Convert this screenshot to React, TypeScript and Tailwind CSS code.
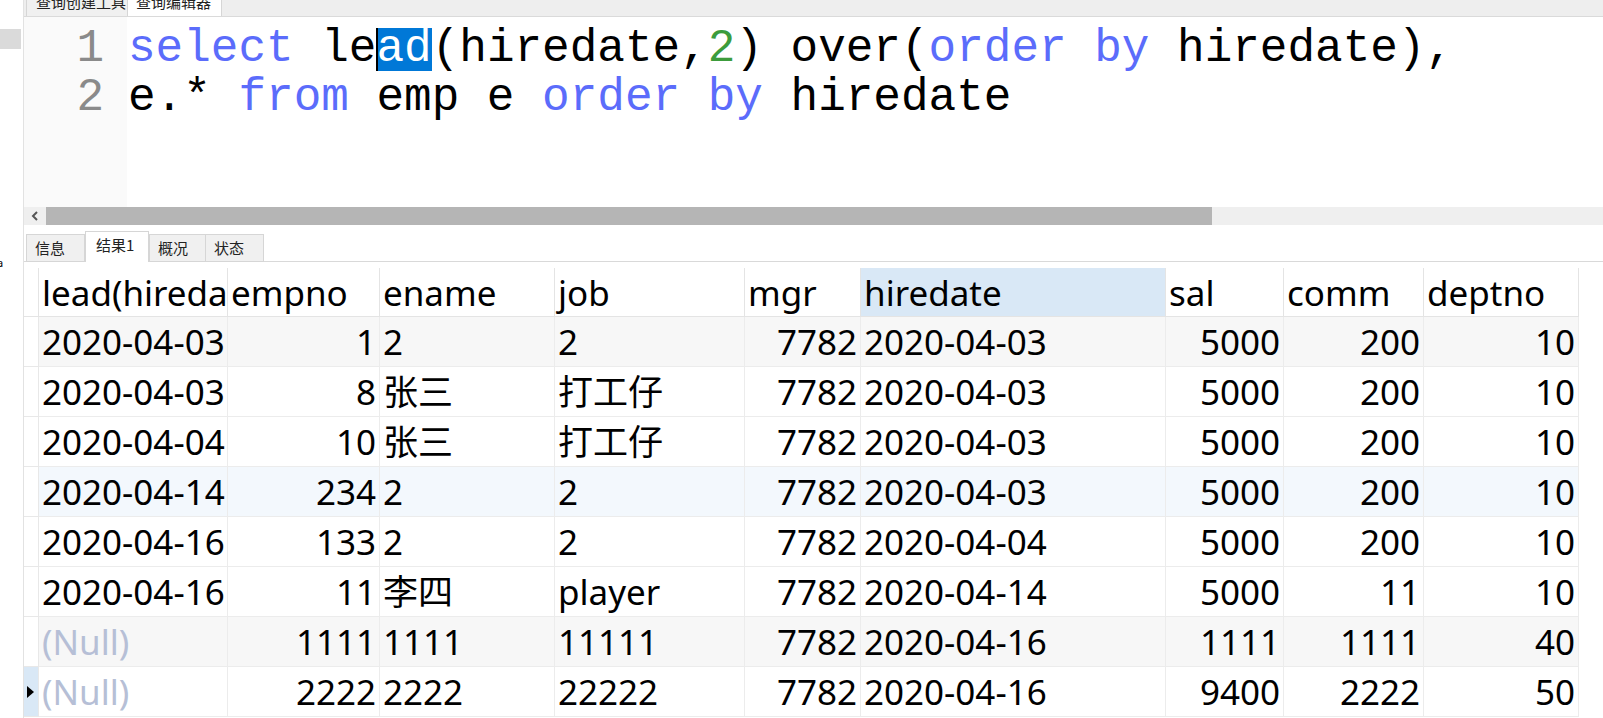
import React from 'react';

type Cell = string | null;

const columns = [
  { name: 'lead(hiredate)', right: false },
  { name: 'empno', right: true },
  { name: 'ename', right: false },
  { name: 'job', right: false },
  { name: 'mgr', right: true },
  { name: 'hiredate', right: false },
  { name: 'sal', right: true },
  { name: 'comm', right: true },
  { name: 'deptno', right: true },
];

const rows: Cell[][] = [
  ['2020-04-03', '1', '2', '2', '7782', '2020-04-03', '5000', '200', '10'],
  ['2020-04-03', '8', '张三', '打工仔', '7782', '2020-04-03', '5000', '200', '10'],
  ['2020-04-04', '10', '张三', '打工仔', '7782', '2020-04-03', '5000', '200', '10'],
  ['2020-04-14', '234', '2', '2', '7782', '2020-04-03', '5000', '200', '10'],
  ['2020-04-16', '133', '2', '2', '7782', '2020-04-04', '5000', '200', '10'],
  ['2020-04-16', '11', '李四', 'player', '7782', '2020-04-14', '5000', '11', '10'],
  [null, '1111', '1111', '11111', '7782', '2020-04-16', '1111', '1111', '40'],
  [null, '2222', '2222', '22222', '7782', '2020-04-16', '9400', '2222', '50'],
];

// row backgrounds as in the screenshot (striped + hover tint)
const rowBg = [
  'bg-[#f7f7f7]',
  'bg-white',
  'bg-white',
  'bg-[#f3f8fd]',
  'bg-white',
  'bg-white',
  'bg-[#f7f7f7]',
  'bg-white',
];

const gridCols =
  'grid grid-cols-[15px_189px_152px_175px_190px_116px_305px_118px_140px_155px]';

const kw = 'text-[#5b6cfb]';

export default function App() {
  return (
    <div className="flex h-[718px] w-[1603px] overflow-hidden bg-white">
      {/* Left strip */}
      <div className="w-[24px] shrink-0 overflow-hidden border-r border-[#e2e2e2]">
        <div className="mt-[29px] h-[20px] w-[21px] bg-[#dadada]" />
        <div className="mt-[208px] -ml-[3px] font-['Noto_Sans',sans-serif] text-[11px] leading-[12px] text-black">
          a
        </div>
      </div>

      <div className="flex min-w-0 flex-1 flex-col">
        {/* Top tab strip, cut off at the top */}
        <div className="flex h-[17px] overflow-hidden border-b border-[#dadada] bg-[#eeeeee] pl-[2px] font-['Noto_Sans_CJK_SC',sans-serif] text-[15px] leading-[15px] text-[#222]">
          <div className="h-full w-[102px] border-x border-[#d6d6d6] bg-[#f0f0f0] pl-[9px]">
            <div className="-mt-[6px]">查询创建工具</div>
          </div>
          <div className="h-full w-[94px] border-r border-[#d6d6d6] bg-white pl-[8px]">
            <div className="-mt-[6px]">查询编辑器</div>
          </div>
        </div>

        {/* Editor */}
        <div className="flex h-[190px] font-['Liberation_Mono',monospace] text-[46px] leading-[49px]">
          <div className="w-[103px] shrink-0 bg-[#fafafa] pt-[8px] pr-[23px] text-right text-[#8a8a8a]">
            <div>1</div>
            <div>2</div>
          </div>
          <div className="whitespace-pre pt-[8px] pl-[1px] text-black">
            <div>
              <span className={kw}>select</span> le
              <span className="inline-block bg-[#0078d7] leading-[43px] text-white shadow-[inset_2px_0_0_#000]">ad</span>
              (hiredate,<span className="text-[#3c9c3c]">2</span>) over(
              <span className={kw}>order by</span> hiredate),
            </div>
            <div>
              e.* <span className={kw}>from</span> emp e <span className={kw}>order by</span> hiredate
            </div>
          </div>
        </div>

        {/* Horizontal scrollbar */}
        <div className="flex h-[18px] items-center bg-[#efefef]">
          <div className="flex w-[22px] items-center justify-center">
            <svg width="8" height="10" viewBox="0 0 8 10">
              <polyline points="6,1 2,5 6,9" fill="none" stroke="#555" strokeWidth="2" />
            </svg>
          </div>
          <div className="h-[18px] w-[1166px] bg-[#b5b5b5]" />
        </div>

        {/* Result tabs */}
        <div className="flex h-[37px] items-end border-b border-[#d9d9d9] pl-[2px] font-['Noto_Sans_CJK_SC',sans-serif] text-[15px] text-[#222]">
          <div className="-mb-px flex h-[28px] w-[59px] items-center border border-[#d6d6d6] bg-[#f0f0f0] pl-[8px]">信息</div>
          <div className="-mb-px flex h-[31px] w-[64px] items-center border-x border-t border-[#d6d6d6] bg-white pl-[10px] pb-[3px]">结果1</div>
          <div className="-mb-px flex h-[28px] w-[57px] items-center border border-[#d6d6d6] bg-[#f0f0f0] pl-[8px]">概况</div>
          <div className="-mb-px flex h-[28px] w-[58px] items-center border border-l-0 border-[#d6d6d6] bg-[#f0f0f0] pl-[8px]">状态</div>
        </div>

        {/* Result grid */}
        <div className="pt-[6px] font-['Noto_Sans','Noto_Sans_CJK_SC',sans-serif] text-[35px] text-black">
          <div className={gridCols}>
            <div className="h-[49px] border-r border-b border-[#e4e4e4]" />
            {columns.map((c) => (
              <div
                key={c.name}
                className={
                  'flex h-[49px] items-center overflow-hidden whitespace-nowrap border-r border-b border-[#e4e4e4] pl-[3px] leading-none ' +
                  (c.name === 'hiredate' ? 'bg-[#d9e8f6]' : 'bg-white')
                }
              >
                {c.name}
              </div>
            ))}
          </div>

          {rows.map((r, i) => (
            <div key={i} className={gridCols}>
              <div
                className={
                  'flex h-[50px] items-center border-r border-b border-[#e8e8e8] ' +
                  (i === rows.length - 1 ? 'bg-[#d9e8f6]' : 'bg-white')
                }
              >
                {i === rows.length - 1 && (
                  <svg width="10" height="14" viewBox="0 0 10 14" className="ml-[2px]">
                    <polygon points="1,1 8,7 1,13" fill="#000" />
                  </svg>
                )}
              </div>
              {r.map((v, j) => (
                <div
                  key={j}
                  className={
                    'flex h-[50px] items-center overflow-hidden whitespace-nowrap border-r border-b border-[#ececec] leading-none ' +
                    rowBg[i] +
                    ' ' +
                    (columns[j].right ? 'justify-end pr-[3px]' : 'pl-[3px]')
                  }
                >
                  {v === null ? <span className="text-[#b6bfd6]">(Null)</span> : v}
                </div>
              ))}
            </div>
          ))}
        </div>
      </div>
    </div>
  );
}
